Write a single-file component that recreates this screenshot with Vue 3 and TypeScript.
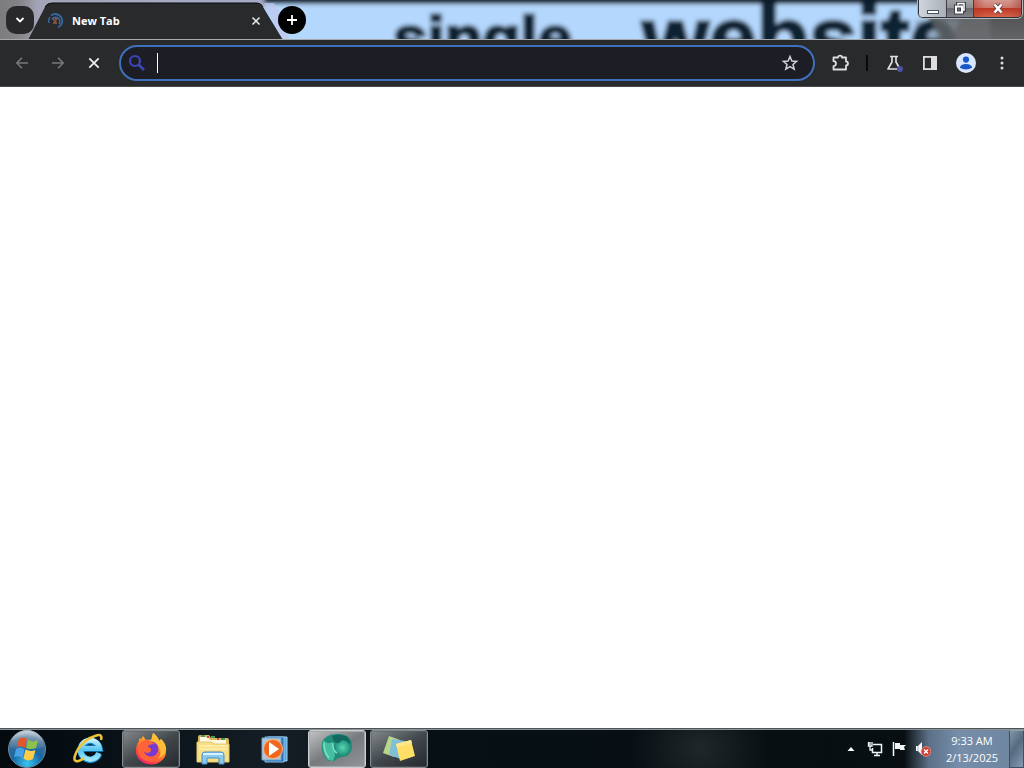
<script setup lang="ts">
import { ref, onMounted } from 'vue'

const address = ref('')
const addressBox = ref<HTMLInputElement | null>(null)

onMounted(() => addressBox.value?.focus())
</script>

<template>
  <div class="desktop">
    <header class="titlebar">
      <svg class="wallpaper" aria-hidden="true">
        <defs>
          <filter id="soft" x="-10%" y="-20%" width="120%" height="140%"><feGaussianBlur stdDeviation="2" /></filter>
          <linearGradient id="leftGlass">
            <stop offset="0" stop-color="#777678" />
            <stop offset=".1" stop-color="#858488" />
            <stop offset=".16" stop-color="#a3a5b8" />
            <stop offset="1" stop-color="#a7acc8" />
          </linearGradient>
          <linearGradient id="rightGlass" x2="0" y2="1">
            <stop offset="0" stop-color="#3e4042" />
            <stop offset="1" stop-color="#747577" />
          </linearGradient>
        </defs>
        <g filter="url(#soft)">
          <rect x="-10" y="-10" width="300" height="70" fill="url(#leftGlass)" />
          <rect x="264" y="4" width="665" height="60" fill="#b4d7fd" />
          <rect x="264" y="-8" width="680" height="12" fill="#111c2c" />
          <rect x="938" y="-10" width="1200" height="70" fill="url(#rightGlass)" />
          <path d="M915 20 L960 20 L945 50 L915 50Z" fill="#94acc8" />
          <g stroke="#0d2230" stroke-width="3">
            <text x="393" y="59" font-size="62">single</text>
            <text x="642" y="67" font-size="86">website</text>
          </g>
          <path d="M930 16 L990 16 L990 50 L942 50Z" fill="#6b6d70" opacity=".75" />
        </g>
        <path d="M282 40 L264 3 L274 3 Q289 22 288 40Z" fill="#c0c6ed" opacity=".7" />
      </svg>

      <button class="tab-search" aria-label="Search tabs">
        <svg width="10" height="8" viewBox="0 0 10 8"><path d="M1.500 2 L5 5.500 L8.500 2" fill="none" stroke="#fff" stroke-width="1.800" /></svg>
      </button>

      <div class="tab">
        <svg class="tab-shape" viewBox="0 0 256 38" preserveAspectRatio="none" aria-hidden="true">
          <path d="M0 38 L17 5 Q19 1 24 1 H229 Q233 1 235 5 L255 38Z" fill="#292a2b" />
          <path d="M17 5 Q19 1 24 1 H229 Q233 1 235 5" fill="none" stroke="#0b0b0c" />
        </svg>
        <svg class="spinner" width="16" height="16" viewBox="0 0 16 16" fill="none">
          <path d="M3 2.500 A7 7 0 1 1 10 14.500" stroke="#34679f" stroke-width="1.900" />
          <path d="M1 10 A7 7 0 0 1 2 4" stroke="#34679f" stroke-width="1.500" />
          <path d="M4 6 A4.300 4.300 0 1 1 11 11" stroke="#3d6c9e" stroke-width="1.600" />
          <path d="M5 6 L8 9 M5 10 L9 10 M7 5 L9 7" stroke="#965b48" stroke-width="1.700" />
        </svg>
        <span class="tab-title">New Tab</span>
        <button class="tab-close" aria-label="Close tab">
          <svg width="10" height="10" viewBox="0 0 10 10"><path d="M1.500 1.500 L8.500 8.500 M8.500 1.500 L1.500 8.500" stroke="#eee" stroke-width="1.500" /></svg>
        </button>
      </div>

      <button class="new-tab" aria-label="New tab">
        <svg width="12" height="12" viewBox="0 0 12 12"><path d="M6 1 V11 M1 6 H11" stroke="#fff" stroke-width="1.800" /></svg>
      </button>

      <div class="window-controls">
        <button aria-label="Minimize">
          <svg width="14" height="14" viewBox="0 0 14 14"><rect x="1.500" y="8.500" width="11" height="3" fill="#fff" stroke="#4a525e" /></svg>
        </button>
        <button class="restore" aria-label="Restore">
          <svg width="14" height="14" viewBox="0 0 14 14" fill="none">
            <path d="M5 3 V1.500 H11 V8 H9.500" stroke="#3d424a" stroke-width="4" /><rect x="3" y="4.500" width="6" height="6" stroke="#3d424a" stroke-width="4" />
            <path d="M5 3 V1.500 H11 V8 H9.500" stroke="#fff" stroke-width="1.500" /><rect x="3" y="4.500" width="6" height="6" stroke="#fff" stroke-width="2" />
          </svg>
        </button>
        <button class="close" aria-label="Close">
          <svg width="14" height="14" viewBox="0 0 14 14"><path d="M3.500 2.500 L10.500 10.500 M10.500 2.500 L3.500 10.500" stroke="#6b4040" stroke-width="4.200" /><path d="M3.500 2.500 L10.500 10.500 M10.500 2.500 L3.500 10.500" stroke="#fff" stroke-width="2.600" /></svg>
        </button>
      </div>
    </header>

    <nav class="toolbar" aria-label="Browser toolbar">
      <button class="tool" aria-label="Back">
        <svg width="16" height="16" viewBox="0 0 16 16" fill="none" stroke="#77787a" stroke-width="1.600"><path d="M14 8 H3 M8 2.800 L2.800 8 L8 13.200" /></svg>
      </button>
      <button class="tool" aria-label="Forward">
        <svg width="16" height="16" viewBox="0 0 16 16" fill="none" stroke="#77787a" stroke-width="1.600"><path d="M2 8 H13 M8 2.800 L13.200 8 L8 13.200" /></svg>
      </button>
      <button class="tool" aria-label="Stop loading">
        <svg width="16" height="16" viewBox="0 0 16 16" fill="none" stroke="#f1f1f1" stroke-width="1.700"><path d="M3.300 3.300 L12.700 12.700 M12.700 3.300 L3.300 12.700" /></svg>
      </button>

      <div class="omnibox">
        <svg width="18" height="18" viewBox="0 0 18 18" fill="none" stroke="#3c46bd"><circle cx="7" cy="7" r="5" stroke-width="2.200" /><path d="M10.500 10.500 L16 16" stroke-width="2.600" /></svg>
        <input ref="addressBox" v-model="address" type="text" aria-label="Address and search bar" />
        <button class="bookmark" aria-label="Bookmark this tab">
          <svg width="18" height="18" viewBox="0 0 18 18"><path d="M9 2.500 L10.900 7 L15.600 7.400 L12 10.500 L13.200 15.200 L9 12.700 L4.800 15.200 L6 10.500 L2.400 7.400 L7.100 7Z" fill="none" stroke="#d0d1d4" stroke-width="1.500" /></svg>
        </button>
      </div>

      <button class="tool extensions" aria-label="Extensions">
        <svg width="18" height="18" viewBox="0 0 18 18"><path d="M2.500 3.500 H7 A2 1.800 0 0 1 11 3.500 H15 V7.500 A2 2 0 0 1 15 11.500 V15.500 H2.500 V12.200 A2.500 2.500 0 0 0 2.500 7.200Z" fill="none" stroke="#dddddf" stroke-width="1.800" stroke-linejoin="round" /></svg>
      </button>
      <span class="divider"></span>
      <button class="tool" aria-label="Experiments">
        <svg width="18" height="18" viewBox="0 0 18 18" fill="none"><path d="M5 2.500 H13 M7 3 V8 L3 15 H15 L11 8 V3" stroke="#dddddf" stroke-width="1.700" stroke-linejoin="round" /><circle cx="15" cy="15" r="3" fill="#4c52a6" /></svg>
      </button>
      <button class="tool" aria-label="Side panel">
        <svg width="18" height="18" viewBox="0 0 18 18"><rect x="2.900" y="2.900" width="12.200" height="12.200" fill="#292a2b" stroke="#dddddf" stroke-width="1.800" /><path d="M10 2.500 H15.500 V15.500 H10Z" fill="#dddddf" /></svg>
      </button>
      <button class="tool" aria-label="Profile">
        <svg width="20" height="20" viewBox="0 0 20 20"><circle cx="10" cy="10" r="10" fill="#d9e6fb" /><circle cx="10" cy="6.600" r="3.100" fill="#1758c8" /><path d="M3.800 14.800 Q4.500 11 10 11 Q15.500 11 16.200 14.800 Q10 18 3.800 14.800Z" fill="#1758c8" /></svg>
      </button>
      <button class="tool" aria-label="Menu">
        <svg width="4" height="16" viewBox="0 0 4 16" fill="#dddddf"><circle cx="2" cy="3" r="1.500" /><circle cx="2" cy="8" r="1.500" /><circle cx="2" cy="13" r="1.500" /></svg>
      </button>
    </nav>

    <main class="page"></main>

    <footer class="taskbar">
      <button class="start" aria-label="Start">
        <svg width="40" height="40" viewBox="0 0 40 40">
          <defs>
            <radialGradient id="orb" cx=".5" cy=".9" r=".9"><stop offset="0" stop-color="#36c5f0" /><stop offset=".45" stop-color="#1768a5" /><stop offset=".8" stop-color="#456d90" /><stop offset="1" stop-color="#abc0cd" /></radialGradient>
            <linearGradient id="orbGloss" x2="0" y2="1"><stop offset="0" stop-color="#fff" stop-opacity=".45" /><stop offset="1" stop-color="#fff" stop-opacity=".03" /></linearGradient>
          </defs>
          <circle cx="20" cy="20" r="18.500" fill="url(#orb)" stroke="#6a8697" />
          <path d="M3 18 A17 17 0 0 1 37 18 Q20 24 3 18Z" fill="url(#orbGloss)" />
          <path d="M12 10 Q16 7 20 10 L18 19 Q14 16 9.500 18Z" fill="#e4572c" />
          <path d="M21 10.500 Q25 14 31 11 L29 19 Q23 21 19 19Z" fill="#8dc248" />
          <path d="M9 20 Q14 17.500 17.500 20.500 L15.500 29 Q12 26 7 28Z" fill="#4aa2e6" />
          <path d="M18.500 20.500 Q23.500 23 28.500 21 L26 30 Q21 33 16.500 29.500Z" fill="#fdce45" />
        </svg>
      </button>

      <button class="task" aria-label="Internet Explorer">
        <svg width="34" height="34" viewBox="0 0 34 34" fill="none">
          <defs><linearGradient id="ie" x2="0" y2="1"><stop offset="0" stop-color="#c0effd" /><stop offset=".5" stop-color="#55c5f2" /><stop offset="1" stop-color="#9ce4fc" /></linearGradient></defs>
          <path d="M27 22 A9.500 9.500 0 1 1 27.500 16.500 H11" stroke="#1583c7" stroke-width="6.500" />
          <path d="M27 21 A9.500 9.500 0 1 1 27.500 16.500 H11" stroke="url(#ie)" stroke-width="5.200" />
          <path d="M29 8 Q31 1 23 4 Q13 7 6 17 Q0 28 4 29 Q7 30 12 26" stroke="#edc438" stroke-width="2.500" />
        </svg>
      </button>

      <button class="task running" aria-label="Firefox">
        <svg width="34" height="34" viewBox="0 0 34 34">
          <defs><linearGradient id="fox" x1=".8" y1="0" x2=".2" y2="1"><stop offset="0" stop-color="#fff14b" /><stop offset=".4" stop-color="#ff9a25" /><stop offset=".75" stop-color="#ff483d" /><stop offset="1" stop-color="#ed197d" /></linearGradient></defs>
          <path d="M7 7 L9 4 L12 8 Q15 7 17 8 L19 1 Q23 4 25 9 L27 7 Q33 12 32 20 A15 13 0 0 1 2 19 Q2 13 5 9 L5 6Z" fill="url(#fox)" />
          <circle cx="17" cy="17" r="7.500" fill="#783ad1" />
          <path d="M7 10 Q13 6 16 9 L21 12 Q14 12 14 15 Q18 16 17 19 Q14 23 9 19 Q12 26 19 25 Q26 23 24 17 Q33 29 17 30 Q3 28 4 16Z" fill="#ff6438" />
          <path d="M19 1 Q17 8 23 12 Q30 18 24 27 Q34 21 31 14 L27 7 L26 10 Q23 3 19 1Z" fill="#ffbd35" />
        </svg>
      </button>

      <button class="task" aria-label="Windows Explorer">
        <svg width="36" height="34" viewBox="0 0 36 34">
          <path d="M3 5 Q3 3 5 3 H14 L16 6 H32 Q34 6 34 8 V30 H3Z" fill="#d9b75b" />
          <path d="M5 5 H13 L15 8 H31 V13 H5Z" fill="#fffbe5" />
          <path d="M6 4 H10 M16 5 H20 M26 7 H30" stroke="#4a9d58" stroke-width="2" />
          <path d="M12 5 H14 M22 7 H24" stroke="#c94c35" stroke-width="2" />
          <path d="M2 10 H17 L19 12 H34 V30 H2Z" fill="#f6df88" stroke="#e3c86a" />
          <path d="M4 14 H32 M4 17 H32" stroke="#fff0a9" stroke-width="1.500" />
          <path d="M7 32 V23 Q7 20 10 20 H26 Q29 20 29 23 V32 H24 V26 H12 V32Z" fill="#8ac9ee" stroke="#4a8fc5" />
          <path d="M8 22 H28" stroke="#d9f2ff" stroke-width="2" />
        </svg>
      </button>

      <button class="task" aria-label="Windows Media Player">
        <svg width="34" height="34" viewBox="0 0 34 34">
          <path d="M10 5 H29 V29 H10Z" fill="#5aa5dd" stroke="#a1d1f1" />
          <path d="M7 5 H26 V30 H7Z" fill="#2c73b4" stroke="#8ac2ee" />
          <path d="M4 6 H23 V28 H4Z" fill="#b6c4ce" stroke="#6ba9d7" />
          <circle cx="15" cy="17" r="9.500" fill="#ef661e" stroke="#ffb17d" />
          <path d="M11 10 L21 17 L11 24Z" fill="#fff" />
        </svg>
      </button>

      <button class="task running active" aria-label="Browser">
        <svg width="36" height="32" viewBox="0 0 36 32">
          <defs><radialGradient id="teal"><stop offset="0" stop-color="#58d4b0" /><stop offset="1" stop-color="#239581" /></radialGradient></defs>
          <path d="M3 9 Q7 1 18 1 Q31 0 33 11 Q34 23 23 24 Q18 25 15 28 L9 28 Q1 20 3 9Z" fill="#208c7a" />
          <path d="M13 3 Q27 -1 31 8 Q32 13 25 12 Q15 13 13 3Z" fill="#12695e" />
          <path d="M16 9 Q20 12 23 7 Q31 8 31 14 Q30 23 22 22 Q16 20 16 9Z" fill="url(#teal)" />
          <path d="M4 7 Q9 12 13 9 Q16 16 16 22 L14 28 L9 27 Q2 19 4 7Z" fill="#45bda0" />
          <path d="M5 10 Q5 19 10 25 M14 10 Q13 17 18 20" fill="none" stroke="#82e0c6" stroke-width="1.500" />
        </svg>
      </button>

      <button class="task running" aria-label="Sticky Notes">
        <svg width="36" height="32" viewBox="0 0 36 32">
          <path d="M8 3 L19 7 L13 24 L2 20Z" fill="#b7d88c" />
          <path d="M11 6 L24 8 L20 26 L8 22Z" fill="#82bed6" />
          <path d="M15 11 L30 7 L34 23 L19 28Z" fill="#ffdf66" />
          <path d="M15 11 L30 7 L31 10 L16 14Z" fill="#ffe990" />
        </svg>
      </button>

      <div class="tray">
        <button class="tray-icon" aria-label="Show hidden icons"><svg width="16" height="16" viewBox="0 0 16 16"><path d="M4.500 10 L8 6 L11.500 10Z" fill="#fff" /></svg></button>
        <button class="tray-icon" aria-label="Network"><svg width="16" height="16" viewBox="0 0 16 16" fill="none" stroke="#f2f4f5"><path d="M6 3.500 H14.500 V11.500 H5.500 V7 M7 14.500 H13 M10 12 V14" stroke-width="1.500" /><path d="M1.500 1 V5 H5 V1 M3 1 V4 M3 5 V9 H5" stroke-width="1.300" /></svg></button>
        <button class="tray-icon" aria-label="Action Center"><svg width="16" height="16" viewBox="0 0 16 16"><path d="M2.500 1 V15" stroke="#fff" stroke-width="1.500" /><path d="M4 2 H9 V4 H15 L13 6 L14 9 H9 V8 H4Z" fill="#f2f4f5" /></svg></button>
        <button class="tray-icon" aria-label="Volume muted"><svg width="16" height="16" viewBox="0 0 16 16"><path d="M1 5 H3 L7 1 V14 L3 10 H1Z" fill="#fff" /><path d="M3 5 V10" stroke="#9cb1c1" /><circle cx="11" cy="10.500" r="4.800" fill="#cd3c31" stroke="#e58b7d" /><path d="M9 8.500 L13 12.500 M13 8.500 L9 12.500" stroke="#fff" stroke-width="1.500" /></svg></button>
        <button class="clock"><time datetime="2025-02-13T09:33">9:33 AM<br />2/13/2025</time></button>
        <button class="show-desktop" aria-label="Show desktop"></button>
      </div>
    </footer>
  </div>
</template>

<style>
html, body { margin: 0; background: #fff; }
</style>

<style scoped>
* { box-sizing: border-box; }
.desktop { display: flex; flex-direction: column; min-height: 100vh; font-family: "Open Sans", "Noto Sans", sans-serif; font-size: 11px; }
button { display: flex; align-items: center; justify-content: center; padding: 0; border: 0; background: none; color: #fff; font: inherit; flex: none; }
svg { display: block; flex: none; }

.titlebar { position: relative; display: flex; align-items: flex-start; height: 40px; overflow: hidden; background: #68696c; border-bottom: 1px solid #a5a8ac; }
.wallpaper { position: absolute; inset: 0; width: 100%; height: 100%; fill: #0d2230; font-family: "Liberation Sans", Arial, sans-serif; font-weight: bold; }
.tab-search { position: relative; width: 28px; height: 28px; margin: 6px 0 0 6px; border-radius: 10px; background: #29292b; }
.tab { position: relative; display: flex; align-items: center; width: 256px; height: 38px; margin: 2px 0 0 -6px; padding: 0 20px; }
.tab-shape { position: absolute; inset: 0; width: 100%; height: 100%; }
.spinner { position: relative; }
.tab-title { position: relative; flex: 1; margin-left: 8px; color: #fff; font-weight: 700; line-height: 16px; }
.tab-close { position: relative; width: 16px; height: 16px; }
.new-tab { position: relative; width: 28px; height: 28px; margin: 6px 0 0 -6px; border-radius: 50%; background: #000; }
.window-controls { position: relative; display: flex; width: 104px; height: 18px; margin: 0 2px 0 auto; border: 1px solid #30333a; border-top: 0; border-radius: 0 0 5px 5px; overflow: hidden; box-shadow: 0 0 0 1px #b0b6be; }
.window-controls button { width: 28px; border-right: 1px solid #3b3e45; background: linear-gradient(90deg, #d1d6dd 0, #a8afb8 100%); }
.window-controls .restore { width: 27px; background: linear-gradient(#a1a3a7 0, #8b8d91 48%, #696b70 50%, #828489 100%); }
.window-controls .close { flex: 1; border: 0; background: linear-gradient(90deg, #b9392988, transparent 25%, transparent 75%, #a13f3888), linear-gradient(#d49a93 0, #cb7667 48%, #c03723 50%, #d3654b 100%); }

.toolbar { display: flex; align-items: center; height: 47px; padding: 0 4px; background: #292a2b; border-bottom: 1px solid #49494a; }
.tool { width: 36px; height: 36px; }
.omnibox { display: flex; align-items: center; flex: 1; min-width: 0; height: 36px; margin: 0 7px; padding: 0 14px 0 7px; border: 2px solid #3e70bc; border-radius: 18px; background: #1d1e25; }
.omnibox input { flex: 1; min-width: 0; height: 20px; margin-left: 11px; padding: 0; border: 0; outline: 0; border-left: 1px solid #fff; background: transparent; color: #fff; caret-color: transparent; font: inherit; }
.bookmark { width: 18px; height: 24px; }
.divider { width: 2px; height: 16px; margin: 0 8px; background: #090909; }

.page { flex: 1; background: #fff; }

.taskbar { display: flex; align-items: center; height: 40px; padding-left: 5px; border-top: 1px solid #4d5558; box-shadow: inset 0 1px #8b9396; background: radial-gradient(ellipse 70px 60px at 700px 20px, #202629, transparent), linear-gradient(90deg, #03090d 0, #0c161d 180px, #151e24 280px, #071015 430px, #080e11 100%); }
.start { width: 44px; height: 39px; }
.task { width: 58px; height: 38px; margin-left: 4px; border: 1px solid transparent; border-radius: 3px; }
.start + .task { margin-left: 11px; }
.running { border-color: #858b8f; background: linear-gradient(150deg, #85898c, #41474b 50%, #24292d); box-shadow: inset 0 0 0 1px #5a606488; }
.active { border-color: #cbcfd1; background: linear-gradient(150deg, #c1c2c3, #777b7d 50%, #929698); box-shadow: inset 0 0 0 1px #a4a8aa; }
.tray { display: flex; align-items: center; align-self: stretch; margin: 1px 0 0 auto; background: linear-gradient(90deg, transparent 65px, #5c7189 90px, #768eaa 120px, #6c849d 100%); }
.tray-icon { width: 24px; height: 38px; }
.clock { width: 74px; height: 38px; color: #fff; text-align: center; line-height: 17px; }
.show-desktop { width: 15px; height: 38px; border: 1px solid #3d5064; border-top-color: #91a0af; background: linear-gradient(125deg, #8396a7, #566b80 45%, #839bb0); }
</style>
